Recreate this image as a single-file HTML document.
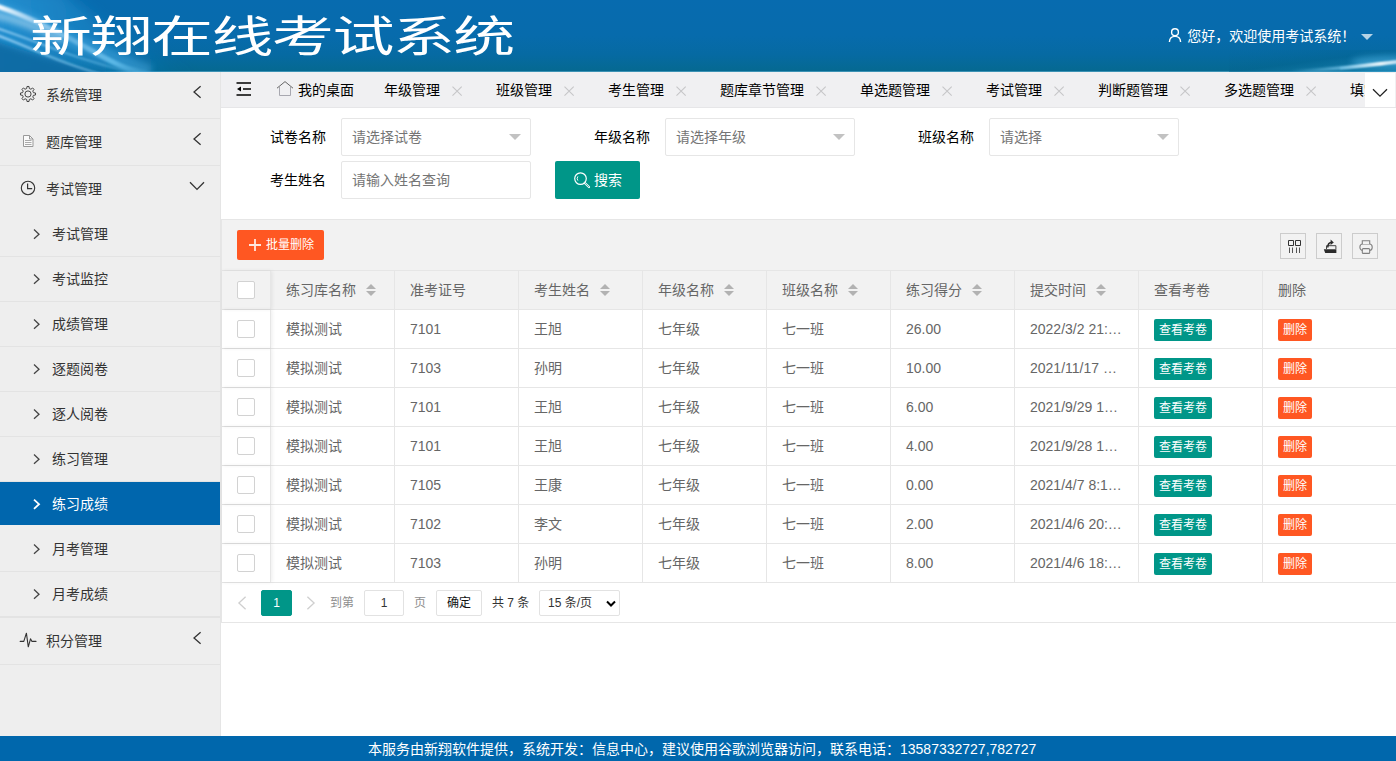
<!DOCTYPE html>
<html lang="zh-CN">
<head>
<meta charset="utf-8">
<title>新翔在线考试系统</title>
<style>
*{box-sizing:border-box;margin:0;padding:0}
html,body{width:1396px;height:761px;overflow:hidden;background:#fff}
body{font-family:"Liberation Sans","Noto Sans CJK SC",sans-serif;font-size:14px;color:#333;position:relative}
svg{display:block}
#hd{position:absolute;left:0;top:0;width:1396px;height:72px;background:#0a6aae;overflow:hidden}
#hd .title{position:absolute;left:30px;top:3px;height:68px;line-height:68px;font-size:43px;color:#fff;white-space:nowrap;letter-spacing:-1px;transform-origin:0 50%;transform:scaleX(1.44);font-weight:400}
#hd .user{position:absolute;left:1187.3px;top:26px;font-size:14px;color:#fff;line-height:20px;white-space:nowrap}
#hd .caret{position:absolute;left:1361px;top:34px;width:0;height:0;border:6px solid transparent;border-top-color:rgba(255,255,255,.7)}
#sb{position:absolute;left:0;top:72px;width:221px;height:664px;background:#eeeeee;border-right:1px solid #e5e5e5}
#sb .it{position:absolute;left:0;width:220px;border-bottom:1px solid #e3e3e3;color:#333;font-size:14px;white-space:nowrap}
#sb .p{height:47px;line-height:46px}
#sb .s{height:45px;line-height:44px}
#sb .nb{border-bottom-color:#eee}
#sb .it span.t{position:absolute;left:46px;top:0}
#sb .s span.t{left:52px}
#sb .ic,#sb .ch{position:absolute}
#sb .act{background:#0066ad;color:#fff;height:43px;border-bottom:none}
#tabs{position:absolute;left:221px;top:72px;width:1175px;height:36px;background:#f0f0f2;border-bottom:1px solid #e6e6e8;overflow:hidden}
#tabs .tb{position:absolute;top:1px;height:35px;line-height:35px;font-size:14px;color:#000;white-space:nowrap}
#tabs .x{position:absolute}
#tabs .dd{position:absolute;left:1144px;top:1px;width:30px;height:34px;background:#fff}
#ft{position:absolute;left:0;top:736px;width:1396px;height:25px;background:#0067ac;color:#fff;font-size:14px;line-height:25px;white-space:nowrap}
#ft span{position:absolute;left:368px;top:1px}
#main{position:absolute;left:0;top:0;width:1396px;height:736px}
.lab{position:absolute;font-size:14px;color:#000;line-height:20px;white-space:nowrap}
.inp{position:absolute;width:190px;height:38px;border:1px solid #e6e6e6;border-radius:2px;background:#fff;color:#757575;font-size:14px;line-height:36px;padding-left:10px;white-space:nowrap}
.inp i{position:absolute;right:9px;top:15px;width:0;height:0;border:6px solid transparent;border-top-color:#c2c2c2}
#tv{position:absolute;left:221px;top:219px;width:1175px;height:404px;border:1px solid #e6e6e6;border-right:none;background:#fff}
#tool{position:absolute;left:0;top:0;width:1175px;height:51px;background:#f2f2f2;border-bottom:1px solid #e6e6e6}
.btn{position:absolute;color:#fff;border-radius:2px;white-space:nowrap;text-align:center}
.ib{position:absolute;top:13px;width:26px;height:26px;border:1px solid #ccc}
.row{position:absolute;left:0;width:1175px;height:39px;border-bottom:1px solid #e6e6e6;color:#666;font-size:14px;line-height:38px}
.row.h{background:#f2f2f2}
.row .c{position:absolute;top:0;height:38px;border-right:1px solid #e6e6e6;padding-left:15px;white-space:nowrap;overflow:hidden}
.row .c.last{border-right:none}
.row .c.fx{padding:0;box-shadow:1px 0 4px rgba(0,0,0,.08)}
.cb{position:absolute;left:15px;top:10px;width:18px;height:18px;border:1px solid #d2d2d2;border-radius:2px;background:#fff}
.srt{position:absolute;top:0;width:10px;height:38px}
.srt:before{content:"";position:absolute;left:0;top:8px;border:5px solid transparent;border-bottom-color:#b2b2b2}
.srt:after{content:"";position:absolute;left:0;top:20px;border:5px solid transparent;border-top-color:#b2b2b2}
.g{background:#009688}.o{background:#ff5722}
.row .btn{top:9px;height:22px;line-height:22px;font-size:12px;padding:0 5px}
#pg{position:absolute;left:0;top:364px;width:1175px;height:38px;font-size:12px;color:#333;white-space:nowrap}
#pg > *{position:absolute}
#pg .bx{top:6px;height:26px;line-height:24px;border:1px solid #e2e2e2;border-radius:2px;background:#fff;text-align:center}
#pg .t{top:6px;line-height:26px}
</style>
</head>
<body>
<div id="hd">
  <svg style="position:absolute;left:0;top:0" width="1396" height="72" viewBox="0 0 1396 72">
    <defs>
      <linearGradient id="bg" x1="0" y1="0" x2="0" y2="1"><stop offset="0" stop-color="#076baf"/><stop offset=".5" stop-color="#076bac"/><stop offset=".75" stop-color="#066aa3"/><stop offset="1" stop-color="#056990"/></linearGradient>
      <linearGradient id="lf" x1="0" y1="0" x2="1" y2="0"><stop offset="0" stop-color="#2a96d6" stop-opacity=".95"/><stop offset=".55" stop-color="#1b86c6" stop-opacity=".6"/><stop offset="1" stop-color="#0a6cb3" stop-opacity="0"/></linearGradient>
      <linearGradient id="s1" gradientUnits="userSpaceOnUse" x1="0" y1="0" x2="152" y2="0"><stop offset="0" stop-color="#fff" stop-opacity=".95"/><stop offset=".22" stop-color="#cfeaff" stop-opacity=".6"/><stop offset=".45" stop-color="#a8dcfa" stop-opacity=".4"/><stop offset=".75" stop-color="#6cc6f2" stop-opacity=".75"/><stop offset="1" stop-color="#6cc6f2" stop-opacity="0"/></linearGradient>
      <linearGradient id="s2" gradientUnits="userSpaceOnUse" x1="0" y1="0" x2="150" y2="0"><stop offset="0" stop-color="#bfe4ff" stop-opacity=".8"/><stop offset=".7" stop-color="#7fd0f7" stop-opacity=".5"/><stop offset="1" stop-color="#6cc6f2" stop-opacity="0"/></linearGradient>
      <linearGradient id="r1" gradientUnits="userSpaceOnUse" x1="1290" y1="0" x2="1396" y2="0"><stop offset="0" stop-color="#7fd0f7" stop-opacity="0"/><stop offset=".5" stop-color="#8fd6f8" stop-opacity=".7"/><stop offset=".85" stop-color="#fff" stop-opacity=".95"/><stop offset="1" stop-color="#dff3ff" stop-opacity=".8"/></linearGradient>
      <linearGradient id="rt" x1="0" y1="0" x2="1" y2="1"><stop offset="0" stop-color="#05679a" stop-opacity="0"/><stop offset=".5" stop-color="#04648f" stop-opacity=".45"/><stop offset="1" stop-color="#2b9bd0" stop-opacity=".5"/></linearGradient>
      <filter id="b1" x="-20%" y="-50%" width="140%" height="200%"><feGaussianBlur stdDeviation="1.1"/></filter>
      <filter id="b3" x="-20%" y="-50%" width="140%" height="200%"><feGaussianBlur stdDeviation="3"/></filter>
      <filter id="b7" x="-20%" y="-50%" width="140%" height="200%"><feGaussianBlur stdDeviation="7"/></filter>
    </defs>
    <rect width="1396" height="72" fill="url(#bg)"/><rect y="71" width="1396" height="1" fill="#4a9cbd" opacity=".8"/>
    <!-- left glow -->
    <path d="M-20 -10 L60 -10 C110 30 150 60 200 80 L-20 80Z" fill="url(#lf)" filter="url(#b7)"/>
    <path d="M-20 36 C40 56 80 68 150 82 L-20 82Z" fill="#0a69a2" opacity=".9" filter="url(#b3)"/>
    <path d="M-10 8 C40 22 80 46 150 73" fill="none" stroke="#4fb0e8" stroke-width="15" opacity=".42" filter="url(#b3)"/>
    <path d="M-10 4 C30 16 66 36 96 53 S132 70 152 74" fill="none" stroke="url(#s1)" stroke-width="5" filter="url(#b1)"/>
    <path d="M-10 14 C20 20 40 28 62 40" fill="none" stroke="#fff" stroke-opacity=".5" stroke-width="5" filter="url(#b3)"/>
    <path d="M-10 33 C20 42 50 60 100 74" fill="none" stroke="url(#s2)" stroke-width="2.200" filter="url(#b1)"/>
    <path d="M-10 26 C30 38 70 58 130 72" fill="none" stroke="url(#s2)" stroke-width="1.600" filter="url(#b1)"/>
    <!-- right tile -->
    <rect x="1229" y="50" width="167" height="22" fill="url(#rt)"/>
    <ellipse cx="1385" cy="62" rx="34" ry="6" fill="#4fb3e4" opacity=".5" filter="url(#b3)"/>
    <path d="M1290 71.500 C1330 70 1360 66 1400 61.500" fill="none" stroke="url(#r1)" stroke-width="3.200" filter="url(#b1)"/><path d="M1340 68.500 C1360 66.500 1380 64 1400 61.500" fill="none" stroke="url(#r1)" stroke-width="1.600" filter="url(#b1)"/>
  </svg>
  <div class="title">新翔在线考试系统</div>
  <svg style="position:absolute;left:1167px;top:27px" width="16" height="16" viewBox="0 0 16 16"><circle cx="8" cy="5.200" r="3.400" fill="none" stroke="#fff" stroke-width="1.400"/><path d="M2.400 15c.2-3.600 2.400-5.600 5.600-5.600s5.400 2 5.600 5.600" fill="none" stroke="#fff" stroke-width="1.400"/></svg>
  <div class="user">您好，欢迎使用考试系统！</div>
  <div class="caret"></div>
</div>

<div id="sb">
<div class="it p" style="top:0px"><svg class="ic" style="left:18px;top:12px" width="20" height="20" viewBox="0 0 20 20"><path d="M8.69 4.55 L8.99 2.47 L11.01 2.47 L11.31 4.55 L12.93 5.23 L14.61 3.96 L16.04 5.39 L14.77 7.07 L15.45 8.69 L17.53 8.99 L17.53 11.01 L15.45 11.31 L14.77 12.93 L16.04 14.61 L14.61 16.04 L12.93 14.77 L11.31 15.45 L11.01 17.53 L8.99 17.53 L8.69 15.45 L7.07 14.77 L5.39 16.04 L3.96 14.61 L5.23 12.93 L4.55 11.31 L2.47 11.01 L2.47 8.99 L4.55 8.69 L5.23 7.07 L3.96 5.39 L5.39 3.96 L7.07 5.23Z" fill="none" stroke="#444" stroke-width="1" stroke-linejoin="round"/><circle cx="10" cy="10" r="3.1" fill="none" stroke="#444" stroke-width="1"/></svg><span class="t">系统管理</span><svg class="ch" style="left:190px;top:12px" width="16" height="16" viewBox="0 0 16 16"><path d="M10.6 2.2L4 8l6.6 5.8" fill="none" stroke="#333" stroke-width="1.3"/></svg></div>
<div class="it p" style="top:47px"><svg class="ic" style="left:18px;top:12px" width="20" height="20" viewBox="0 0 20 20"><path d="M5.500 4.500h6l3.500 3.500v7.500h-9.500z" fill="#fafafa" stroke="#999" stroke-width="1"/><path d="M11.500 4.500v3.500h3.500" fill="none" stroke="#999" stroke-width="1"/><path d="M7 9.500h6.500M7 11.500h6.500M7 13.500h6.500" stroke="#aaa" stroke-width="1.200"/></svg><span class="t">题库管理</span><svg class="ch" style="left:190px;top:12px" width="16" height="16" viewBox="0 0 16 16"><path d="M10.6 2.2L4 8l6.6 5.8" fill="none" stroke="#333" stroke-width="1.3"/></svg></div>
<div class="it p nb" style="top:94px"><svg class="ic" style="left:18px;top:12px" width="20" height="20" viewBox="0 0 20 20"><circle cx="10" cy="10" r="6.7" fill="none" stroke="#333" stroke-width="1.1"/><path d="M9.6 5.6v5h4.6" fill="none" stroke="#333" stroke-width="1.2"/></svg><span class="t">考试管理</span><svg class="ch" style="left:188px;top:12px" width="18" height="16" viewBox="0 0 18 16"><path d="M2 4.2L9 11.400l7-7.200" fill="none" stroke="#333" stroke-width="1.3"/></svg></div>
<div class="it s" style="top:140px"><svg class="ch" style="left:31px;top:15px" width="12" height="14" viewBox="0 0 12 14"><path d="M3 2.600L8 7.200 3 11.800" fill="none" stroke="#444" stroke-width="1.300"/></svg><span class="t">考试管理</span></div>
<div class="it s" style="top:185px"><svg class="ch" style="left:31px;top:15px" width="12" height="14" viewBox="0 0 12 14"><path d="M3 2.600L8 7.200 3 11.800" fill="none" stroke="#444" stroke-width="1.300"/></svg><span class="t">考试监控</span></div>
<div class="it s" style="top:230px"><svg class="ch" style="left:31px;top:15px" width="12" height="14" viewBox="0 0 12 14"><path d="M3 2.600L8 7.200 3 11.800" fill="none" stroke="#444" stroke-width="1.300"/></svg><span class="t">成绩管理</span></div>
<div class="it s" style="top:275px"><svg class="ch" style="left:31px;top:15px" width="12" height="14" viewBox="0 0 12 14"><path d="M3 2.600L8 7.200 3 11.800" fill="none" stroke="#444" stroke-width="1.300"/></svg><span class="t">逐题阅卷</span></div>
<div class="it s" style="top:320px"><svg class="ch" style="left:31px;top:15px" width="12" height="14" viewBox="0 0 12 14"><path d="M3 2.600L8 7.200 3 11.800" fill="none" stroke="#444" stroke-width="1.300"/></svg><span class="t">逐人阅卷</span></div>
<div class="it s" style="top:365px"><svg class="ch" style="left:31px;top:15px" width="12" height="14" viewBox="0 0 12 14"><path d="M3 2.600L8 7.200 3 11.800" fill="none" stroke="#444" stroke-width="1.300"/></svg><span class="t">练习管理</span></div>
<div class="it s act" style="top:410px"><svg class="ch" style="left:31px;top:15px" width="12" height="14" viewBox="0 0 12 14"><path d="M3 2.600L8 7.200 3 11.800" fill="none" stroke="#fff" stroke-width="1.800"/></svg><span class="t">练习成绩</span></div>
<div class="it s" style="top:455px"><svg class="ch" style="left:31px;top:15px" width="12" height="14" viewBox="0 0 12 14"><path d="M3 2.600L8 7.200 3 11.800" fill="none" stroke="#444" stroke-width="1.300"/></svg><span class="t">月考管理</span></div>
<div class="it s" style="top:500px"><svg class="ch" style="left:31px;top:15px" width="12" height="14" viewBox="0 0 12 14"><path d="M3 2.600L8 7.200 3 11.800" fill="none" stroke="#444" stroke-width="1.300"/></svg><span class="t">月考成绩</span></div>
<div style="position:absolute;left:0;top:545px;width:220px;height:1px;background:#e3e3e3"></div>
<div class="it p" style="top:546px"><svg class="ic" style="left:18px;top:13px" width="20" height="20" viewBox="0 0 20 20"><path d="M2.2 10.4h3.6l2.6-8.2 1.9 13.6 2.2-8 1.5 2.6h4" fill="none" stroke="#333" stroke-width="1.1" stroke-linejoin="round" stroke-linecap="round"/></svg><span class="t">积分管理</span><svg class="ch" style="left:190px;top:12px" width="16" height="16" viewBox="0 0 16 16"><path d="M10.6 2.2L4 8l6.6 5.8" fill="none" stroke="#333" stroke-width="1.3"/></svg></div>
</div>
<div id="tabs">
<svg style="position:absolute;left:14px;top:9px" width="18" height="16" viewBox="0 0 18 16"><path d="M1.5 2h14.5M8 8h8M1.5 14h14.5" stroke="#000" stroke-width="1.6"/><path d="M2 8l4-2.6v5.2z" fill="#000"/></svg>
<svg style="position:absolute;left:55px;top:8px" width="18" height="18" viewBox="0 0 18 18"><path d="M1 8.2L9 1.6l8 6.6" fill="none" stroke="#666" stroke-width="1"/><path d="M3.500 7v8.500h11V7" fill="none" stroke="#a8a8b0" stroke-width="1"/></svg>
<div class="tb" style="left:77px">我的桌面</div>
<div style="position:absolute;left:0;top:0;width:1144px;height:35px;overflow:hidden">
<div class="tb" style="left:163px">年级管理</div>
<svg class="x" style="left:230px;top:12px" width="12" height="12" viewBox="0 0 12 12"><path d="M1.500 2.600l9.200 9M10.700 2.600l-9.200 9" stroke="#c6c6c8" stroke-width="1.100"/></svg>
<div class="tb" style="left:275px">班级管理</div>
<svg class="x" style="left:342px;top:12px" width="12" height="12" viewBox="0 0 12 12"><path d="M1.500 2.600l9.200 9M10.700 2.600l-9.200 9" stroke="#c6c6c8" stroke-width="1.100"/></svg>
<div class="tb" style="left:387px">考生管理</div>
<svg class="x" style="left:454px;top:12px" width="12" height="12" viewBox="0 0 12 12"><path d="M1.500 2.600l9.200 9M10.700 2.600l-9.200 9" stroke="#c6c6c8" stroke-width="1.100"/></svg>
<div class="tb" style="left:499px">题库章节管理</div>
<svg class="x" style="left:594px;top:12px" width="12" height="12" viewBox="0 0 12 12"><path d="M1.500 2.600l9.200 9M10.700 2.600l-9.200 9" stroke="#c6c6c8" stroke-width="1.100"/></svg>
<div class="tb" style="left:639px">单选题管理</div>
<svg class="x" style="left:720px;top:12px" width="12" height="12" viewBox="0 0 12 12"><path d="M1.500 2.600l9.200 9M10.700 2.600l-9.200 9" stroke="#c6c6c8" stroke-width="1.100"/></svg>
<div class="tb" style="left:765px">考试管理</div>
<svg class="x" style="left:832px;top:12px" width="12" height="12" viewBox="0 0 12 12"><path d="M1.500 2.600l9.200 9M10.700 2.600l-9.200 9" stroke="#c6c6c8" stroke-width="1.100"/></svg>
<div class="tb" style="left:877px">判断题管理</div>
<svg class="x" style="left:958px;top:12px" width="12" height="12" viewBox="0 0 12 12"><path d="M1.500 2.600l9.200 9M10.700 2.600l-9.200 9" stroke="#c6c6c8" stroke-width="1.100"/></svg>
<div class="tb" style="left:1003px">多选题管理</div>
<svg class="x" style="left:1084px;top:12px" width="12" height="12" viewBox="0 0 12 12"><path d="M1.500 2.600l9.200 9M10.700 2.600l-9.200 9" stroke="#c6c6c8" stroke-width="1.100"/></svg>
<div class="tb" style="left:1129px">填空题管理</div>
<svg class="x" style="left:1210px;top:12px" width="12" height="12" viewBox="0 0 12 12"><path d="M1.500 2.600l9.200 9M10.700 2.600l-9.200 9" stroke="#c6c6c8" stroke-width="1.100"/></svg>
</div>
<div class="dd"><svg width="30" height="34" viewBox="0 0 30 34"><path d="M8 16.200l7 7 7-7" fill="none" stroke="#222" stroke-width="1.300"/></svg></div>
</div>
<div id="main">
<div class="lab" style="left:270px;top:127px">试卷名称</div>
<div class="inp" style="left:341px;top:118px">请选择试卷<i></i></div>
<div class="lab" style="left:594px;top:127px">年级名称</div>
<div class="inp" style="left:665px;top:118px">请选择年级<i></i></div>
<div class="lab" style="left:918px;top:127px">班级名称</div>
<div class="inp" style="left:989px;top:118px">请选择<i></i></div>
<div class="lab" style="left:270px;top:170px">考生姓名</div>
<div class="inp" style="left:341px;top:161px">请输入姓名查询</div>
<div class="btn g" style="left:555px;top:161px;width:85px;height:38px;line-height:38px;font-size:14px"><svg style="position:absolute;left:18px;top:10px" width="18" height="18" viewBox="0 0 18 18"><circle cx="7.500" cy="7.600" r="5.800" fill="none" stroke="#fff" stroke-width="1.200"/><path d="M11.800 12l4.200 4" stroke="#fff" stroke-width="2.200" stroke-linecap="round"/><path d="M11.800 12l4.200 4" stroke="#009688" stroke-width=".7"/><path d="M4.900 5.400a3.600 3.600 0 0 0 0 4.200" fill="none" stroke="#fff" stroke-width=".9"/></svg><span style="position:absolute;left:39px;top:0">搜索</span></div>
<div id="tv">
<div id="tool">
<div class="btn o" style="left:15px;top:10px;width:87px;height:30px;line-height:30px;font-size:12px"><svg style="position:absolute;left:11px;top:8px" width="14" height="14" viewBox="0 0 14 14"><path d="M7 1v12M1 7h12" stroke="#fff" stroke-opacity=".85" stroke-width="1.800"/></svg><span style="position:absolute;left:29px;top:0">批量删除</span></div>
<div class="ib" style="left:1058px"><svg width="24" height="24" viewBox="0 0 24 24"><path d="M7.500 6.500h5v5h-5zM14.500 6.500h5v5h-5z" fill="none" stroke="#333" stroke-width="1"/><path d="M8.500 13.500v5.500M11.500 13.500v5.500M15.500 13.500v5.500M18.500 13.500v5.500" stroke="#555" stroke-width="1"/></svg></div>
<div class="ib" style="left:1094px"><svg width="24" height="24" viewBox="0 0 24 24"><path d="M6.800 15.300h12.600v3.700h-11.200z" fill="#2b2b2b"/><path d="M9.500 15v-3.300h9.400v3.300" fill="none" stroke="#444" stroke-width="1"/><path d="M10.800 13.400c0-3.200 1-4.800 3.400-5" fill="none" stroke="#2b2b2b" stroke-width="1.500"/><path d="M13.600 5.600l3.200 2.800-3.200 2.600z" fill="#2b2b2b"/></svg></div>
<div class="ib" style="left:1130px"><svg width="24" height="24" viewBox="0 0 24 24"><rect x="6.900" y="10" width="12.300" height="6.600" rx="3" fill="none" stroke="#808080" stroke-width="1.100"/><path d="M9.300 10v-3.300h7.400v3.300" fill="#f2f2f2" stroke="#808080" stroke-width="1.100"/><rect x="9.300" y="14.600" width="7.400" height="4.800" rx="1" fill="#f2f2f2" stroke="#808080" stroke-width="1.100"/></svg></div>
</div>
<div class="row h" style="top:51px">
<div class="c fx" style="left:0;width:49px"><span class="cb"></span></div>
<div class="c" style="left:49px;width:124px">练习库名称<span class="srt" style="left:95px"></span></div>
<div class="c" style="left:173px;width:124px">准考证号</div>
<div class="c" style="left:297px;width:124px">考生姓名<span class="srt" style="left:81px"></span></div>
<div class="c" style="left:421px;width:124px">年级名称<span class="srt" style="left:81px"></span></div>
<div class="c" style="left:545px;width:124px">班级名称<span class="srt" style="left:81px"></span></div>
<div class="c" style="left:669px;width:124px">练习得分<span class="srt" style="left:81px"></span></div>
<div class="c" style="left:793px;width:124px">提交时间<span class="srt" style="left:81px"></span></div>
<div class="c" style="left:917px;width:124px">查看考卷</div>
<div class="c last" style="left:1041px;width:135px">删除</div>
</div>
<div class="row" style="top:90px">
<div class="c fx" style="left:0;width:49px"><span class="cb"></span></div>
<div class="c" style="left:49px;width:124px">模拟测试</div>
<div class="c" style="left:173px;width:124px">7101</div>
<div class="c" style="left:297px;width:124px">王旭</div>
<div class="c" style="left:421px;width:124px">七年级</div>
<div class="c" style="left:545px;width:124px">七一班</div>
<div class="c" style="left:669px;width:124px">26.00</div>
<div class="c" style="left:793px;width:124px">2022/3/2 21:…</div>
<div class="c" style="left:917px;width:124px"><span class="btn g" style="left:15px">查看考卷</span></div>
<div class="c last" style="left:1041px;width:135px"><span class="btn o" style="left:15px">删除</span></div>
</div>
<div class="row" style="top:129px">
<div class="c fx" style="left:0;width:49px"><span class="cb"></span></div>
<div class="c" style="left:49px;width:124px">模拟测试</div>
<div class="c" style="left:173px;width:124px">7103</div>
<div class="c" style="left:297px;width:124px">孙明</div>
<div class="c" style="left:421px;width:124px">七年级</div>
<div class="c" style="left:545px;width:124px">七一班</div>
<div class="c" style="left:669px;width:124px">10.00</div>
<div class="c" style="left:793px;width:124px">2021/11/17 …</div>
<div class="c" style="left:917px;width:124px"><span class="btn g" style="left:15px">查看考卷</span></div>
<div class="c last" style="left:1041px;width:135px"><span class="btn o" style="left:15px">删除</span></div>
</div>
<div class="row" style="top:168px">
<div class="c fx" style="left:0;width:49px"><span class="cb"></span></div>
<div class="c" style="left:49px;width:124px">模拟测试</div>
<div class="c" style="left:173px;width:124px">7101</div>
<div class="c" style="left:297px;width:124px">王旭</div>
<div class="c" style="left:421px;width:124px">七年级</div>
<div class="c" style="left:545px;width:124px">七一班</div>
<div class="c" style="left:669px;width:124px">6.00</div>
<div class="c" style="left:793px;width:124px">2021/9/29 1…</div>
<div class="c" style="left:917px;width:124px"><span class="btn g" style="left:15px">查看考卷</span></div>
<div class="c last" style="left:1041px;width:135px"><span class="btn o" style="left:15px">删除</span></div>
</div>
<div class="row" style="top:207px">
<div class="c fx" style="left:0;width:49px"><span class="cb"></span></div>
<div class="c" style="left:49px;width:124px">模拟测试</div>
<div class="c" style="left:173px;width:124px">7101</div>
<div class="c" style="left:297px;width:124px">王旭</div>
<div class="c" style="left:421px;width:124px">七年级</div>
<div class="c" style="left:545px;width:124px">七一班</div>
<div class="c" style="left:669px;width:124px">4.00</div>
<div class="c" style="left:793px;width:124px">2021/9/28 1…</div>
<div class="c" style="left:917px;width:124px"><span class="btn g" style="left:15px">查看考卷</span></div>
<div class="c last" style="left:1041px;width:135px"><span class="btn o" style="left:15px">删除</span></div>
</div>
<div class="row" style="top:246px">
<div class="c fx" style="left:0;width:49px"><span class="cb"></span></div>
<div class="c" style="left:49px;width:124px">模拟测试</div>
<div class="c" style="left:173px;width:124px">7105</div>
<div class="c" style="left:297px;width:124px">王康</div>
<div class="c" style="left:421px;width:124px">七年级</div>
<div class="c" style="left:545px;width:124px">七一班</div>
<div class="c" style="left:669px;width:124px">0.00</div>
<div class="c" style="left:793px;width:124px">2021/4/7 8:1…</div>
<div class="c" style="left:917px;width:124px"><span class="btn g" style="left:15px">查看考卷</span></div>
<div class="c last" style="left:1041px;width:135px"><span class="btn o" style="left:15px">删除</span></div>
</div>
<div class="row" style="top:285px">
<div class="c fx" style="left:0;width:49px"><span class="cb"></span></div>
<div class="c" style="left:49px;width:124px">模拟测试</div>
<div class="c" style="left:173px;width:124px">7102</div>
<div class="c" style="left:297px;width:124px">李文</div>
<div class="c" style="left:421px;width:124px">七年级</div>
<div class="c" style="left:545px;width:124px">七一班</div>
<div class="c" style="left:669px;width:124px">2.00</div>
<div class="c" style="left:793px;width:124px">2021/4/6 20:…</div>
<div class="c" style="left:917px;width:124px"><span class="btn g" style="left:15px">查看考卷</span></div>
<div class="c last" style="left:1041px;width:135px"><span class="btn o" style="left:15px">删除</span></div>
</div>
<div class="row" style="top:324px">
<div class="c fx" style="left:0;width:49px"><span class="cb"></span></div>
<div class="c" style="left:49px;width:124px">模拟测试</div>
<div class="c" style="left:173px;width:124px">7103</div>
<div class="c" style="left:297px;width:124px">孙明</div>
<div class="c" style="left:421px;width:124px">七年级</div>
<div class="c" style="left:545px;width:124px">七一班</div>
<div class="c" style="left:669px;width:124px">8.00</div>
<div class="c" style="left:793px;width:124px">2021/4/6 18:…</div>
<div class="c" style="left:917px;width:124px"><span class="btn g" style="left:15px">查看考卷</span></div>
<div class="c last" style="left:1041px;width:135px"><span class="btn o" style="left:15px">删除</span></div>
</div>
<div id="pg">
<svg style="left:15px;top:12px" width="10" height="14" viewBox="0 0 10 14"><path d="M8.600 .8L1.900 7l6.700 6.200" fill="none" stroke="#cfcfcf" stroke-width="1.300"/></svg>
<div class="bx" style="left:39px;width:31px;background:#009688;border-color:#009688;color:#fff">1</div>
<svg style="left:84px;top:12px" width="10" height="14" viewBox="0 0 10 14"><path d="M1.400 .8L8.100 7l-6.700 6.200" fill="none" stroke="#cfcfcf" stroke-width="1.300"/></svg>
<div class="t" style="left:108px;color:#8e8e8e">到第</div>
<div class="bx" style="left:142px;width:40px">1</div>
<div class="t" style="left:192px;color:#8e8e8e">页</div>
<div class="bx" style="left:214px;width:46px;color:#111">确定</div>
<div class="t" style="left:270px">共 7 条</div>
<div class="bx" style="left:317px;width:81px;text-align:left;padding-left:8px;border-color:#e2e2e2">15 条/页<svg style="position:absolute;left:65px;top:8px" width="12" height="10" viewBox="0 0 12 10"><path d="M2 2.500l4 4 4-4" fill="none" stroke="#000" stroke-width="2"/></svg></div>
</div>

</div>
</div>
<div id="ft"><span>本服务由新翔软件提供，系统开发：信息中心，建议使用谷歌浏览器访问，联系电话：13587332727,782727</span></div>
</body>
</html>
